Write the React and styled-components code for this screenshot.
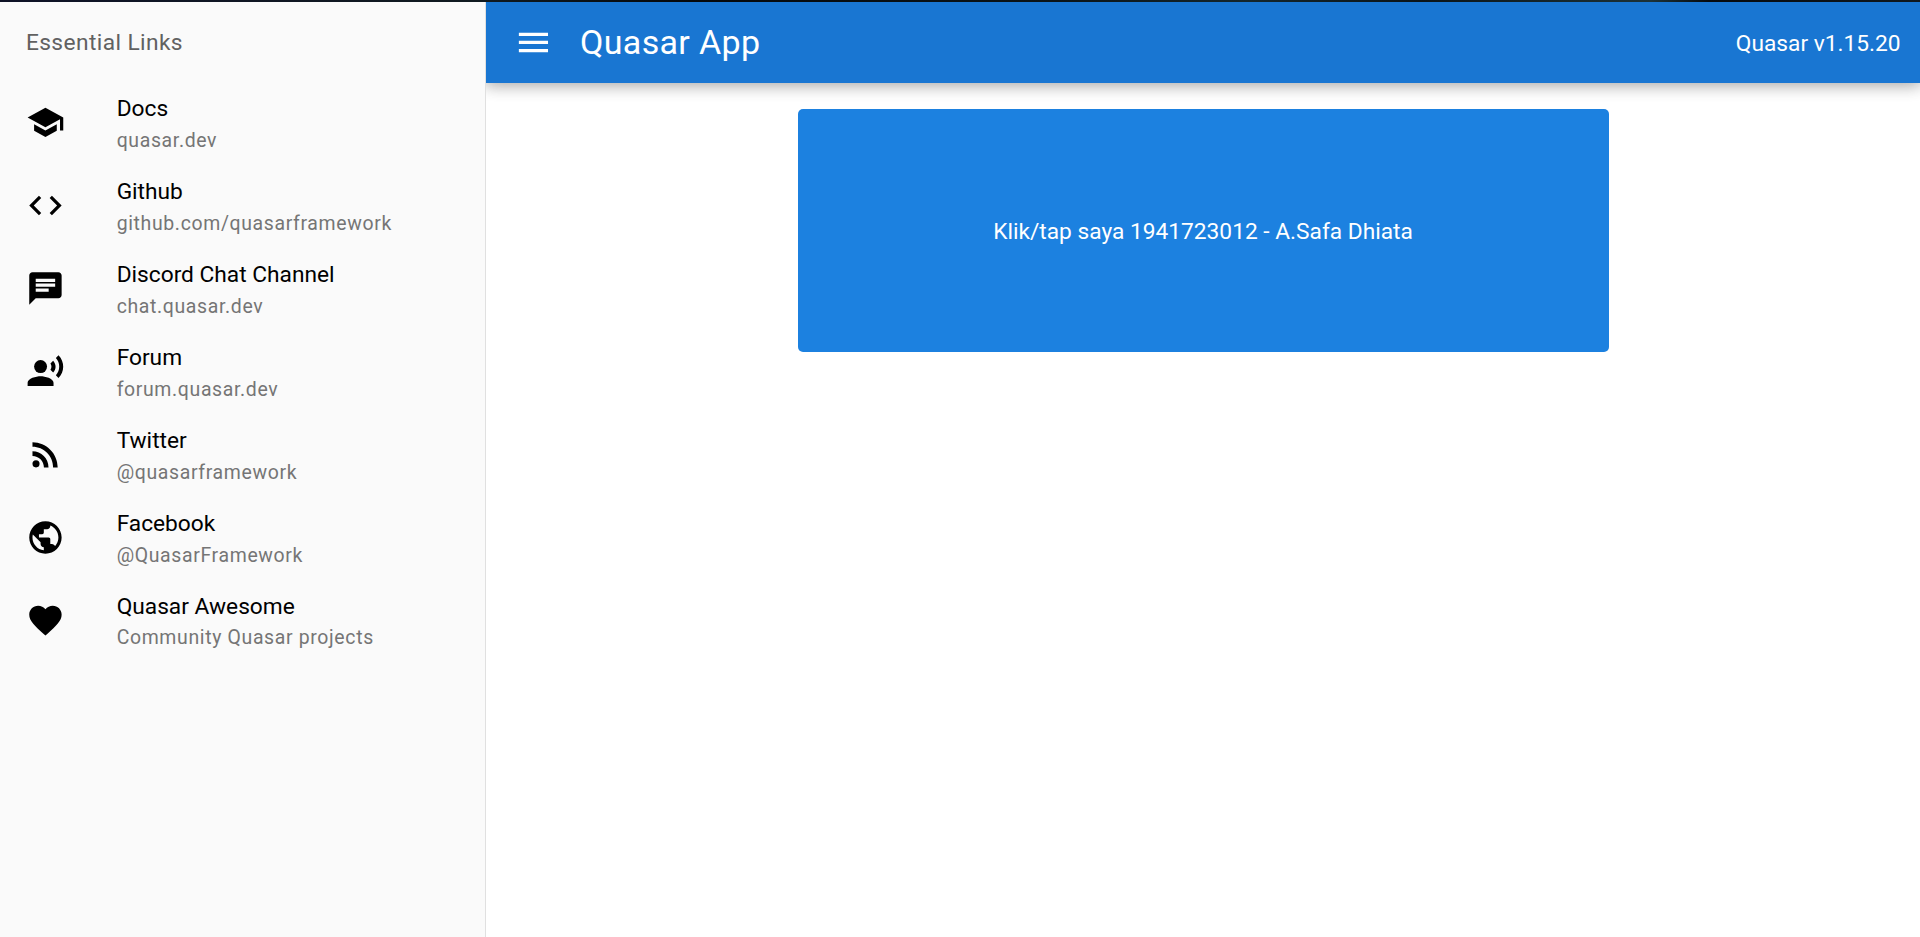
import React from 'react';
import styled, { createGlobalStyle } from 'styled-components';
import {
  MdSchool, MdCode, MdChat, MdRecordVoiceOver, MdRssFeed, MdPublic, MdFavorite, MdMenu,
} from 'react-icons/md';

const GlobalStyle = createGlobalStyle`
  * { box-sizing: border-box; }
  body {
    margin: 0;
    background: #fff;
    color: #000;
    font-family: Roboto, "Liberation Sans", sans-serif;
    font-size: 22.72px;
    line-height: 1.5;
    -webkit-font-smoothing: antialiased;
  }
`;

const Layout = styled.div`
  display: flex;
  flex-direction: column;
  height: 937px;
  overflow: hidden;
`;

const TopEdge = styled.div`
  flex: none;
  height: 2px;
  background: linear-gradient(90deg, #0e1226 0, #101a20 25%, #05080b 36%, #0b1418 55%, #14262c 65%, #0b1418 74%, #1c3238 86%, #060a0e 89%, #10181e 100%);
`;

const Body = styled.div`
  display: flex;
  flex: 1;
  min-height: 0;
`;

const Drawer = styled.aside`
  flex: none;
  width: 486px;
  background: #fafafa;
  border-right: 1px solid #e0e0e0;
`;

const DrawerHeader = styled.div`
  padding: 26.7px 25.92px 25.12px;
  color: #616161;
  line-height: 27.2px;
  letter-spacing: 0.01786em;
`;

const Item = styled.a`
  display: flex;
  align-items: center;
  height: 82.94px;
  padding: 0 25.92px;
`;

const ItemIcon = styled.div`
  display: flex;
  width: 90.72px;
  font-size: 38.88px;
`;

const ItemText = styled.div`
  padding-top: 2.3px;
`;

const ItemLabel = styled.div`
  line-height: 27.2px;
`;

const ItemCaption = styled.div`
  margin-top: 6.5px;
  color: #757575;
  font-size: 19.46px;
  line-height: 23.3px;
  letter-spacing: 0.03333em;
`;

const Main = styled.div`
  flex: 1;
  display: flex;
  flex-direction: column;
  overflow: hidden;
`;

const Toolbar = styled.header`
  flex: none;
  display: flex;
  align-items: center;
  height: 81px;
  padding: 0 19.44px 0 20.1px;
  background: #1976d2;
  color: #fff;
  box-shadow: 0 0 16.2px 3.24px rgba(0, 0, 0, 0.2),
    0 0 16.2px rgba(0, 0, 0, 0.24);
`;

const MenuButton = styled.button`
  display: flex;
  align-items: center;
  justify-content: center;
  width: 54.43px;
  height: 54.43px;
  padding: 0;
  border: 0;
  background: transparent;
  color: inherit;
  font-size: 38.88px;
`;

const Title = styled.div`
  flex: 1;
  padding: 0 19.44px;
  font-size: 34.02px;
  letter-spacing: 0.01em;
`;

const Version = styled.div`
  padding-top: 3px;
`;

const Page = styled.main`
  display: flex;
  justify-content: center;
  padding-top: 26px;
`;

const Card = styled.div`
  display: flex;
  align-items: center;
  justify-content: center;
  width: 811px;
  height: 243px;
  padding-top: 3px;
  border-radius: 5px;
  background: #1c81e0;
  color: #fff;
`;

const links = [
  { icon: MdSchool, title: 'Docs', caption: 'quasar.dev' },
  { icon: MdCode, title: 'Github', caption: 'github.com/quasarframework' },
  { icon: MdChat, title: 'Discord Chat Channel', caption: 'chat.quasar.dev' },
  { icon: MdRecordVoiceOver, title: 'Forum', caption: 'forum.quasar.dev' },
  { icon: MdRssFeed, title: 'Twitter', caption: '@quasarframework' },
  { icon: MdPublic, title: 'Facebook', caption: '@QuasarFramework' },
  { icon: MdFavorite, title: 'Quasar Awesome', caption: 'Community Quasar projects' },
];

export default function App() {
  return (
    <Layout>
      <GlobalStyle />
      <TopEdge />
      <Body>
        <Drawer>
          <DrawerHeader>Essential Links</DrawerHeader>
          {links.map(({ icon: Icon, title, caption }) => (
            <Item key={title}>
              <ItemIcon><Icon /></ItemIcon>
              <ItemText>
                <ItemLabel>{title}</ItemLabel>
                <ItemCaption>{caption}</ItemCaption>
              </ItemText>
            </Item>
          ))}
        </Drawer>
        <Main>
          <Toolbar>
            <MenuButton aria-label="Menu"><MdMenu /></MenuButton>
            <Title>Quasar App</Title>
            <Version>Quasar v1.15.20</Version>
          </Toolbar>
          <Page>
            <Card>Klik/tap saya 1941723012 - A.Safa Dhiata</Card>
          </Page>
        </Main>
      </Body>
    </Layout>
  );
}
